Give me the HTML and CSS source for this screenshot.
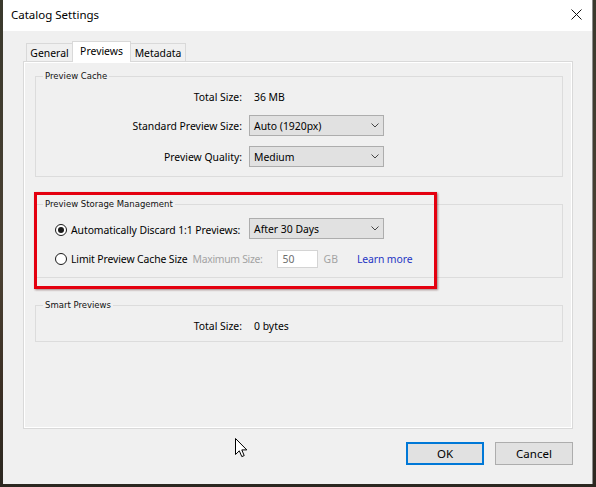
FILE: index.html
```html
<!DOCTYPE html>
<html>
<head>
<meta charset="utf-8">
<title>Catalog Settings</title>
<link rel="stylesheet" href="styles.css">
</head>
<body>
<div class="window">
  <div class="titlebar">
    <span class="title">Catalog Settings</span>
    <svg class="close" viewBox="0 0 11 11" width="11" height="11"><path d="M0.5 0.5 L10.5 10.5 M10.5 0.5 L0.5 10.5" stroke="#111" stroke-width="1" fill="none"/></svg>
  </div>
  <div class="client">
    <div class="tabs">
      <div class="tab general">General</div>
      <div class="tab previews">Previews</div>
      <div class="tab metadata">Metadata</div>
    </div>
    <div class="panel">
      <fieldset class="group cache">
        <legend>Preview Cache</legend>
        <div class="row">
          <span class="label">Total Size:</span><span class="value">36 MB</span>
        </div>
        <div class="row sel r2">
          <span class="label">Standard Preview Size:</span>
          <div class="select"><span>Auto (1920px)</span><svg class="chev" viewBox="0 0 8 5" width="8" height="5"><path d="M0.5 0.5 L4 4 L7.5 0.5" stroke="#444" fill="none" stroke-width="1"/></svg></div>
        </div>
        <div class="row sel r3">
          <span class="label">Preview Quality:</span>
          <div class="select"><span>Medium</span><svg class="chev" viewBox="0 0 8 5" width="8" height="5"><path d="M0.5 0.5 L4 4 L7.5 0.5" stroke="#444" fill="none" stroke-width="1"/></svg></div>
        </div>
      </fieldset>
      <fieldset class="group storage">
        <legend>Preview Storage Management</legend>
        <div class="row sel">
          <span class="radio-label"><span class="radio checked"></span><span class="rtext tight">Automatically Discard 1:1 Previews:</span></span>
          <div class="select"><span>After 30 Days</span><svg class="chev" viewBox="0 0 8 5" width="8" height="5"><path d="M0.5 0.5 L4 4 L7.5 0.5" stroke="#444" fill="none" stroke-width="1"/></svg></div>
        </div>
        <div class="row r-limit">
          <span class="radio-label auto"><span class="radio"></span><span class="rtext">Limit Preview Cache Size</span></span>
          <span class="muted max">Maximum Size:</span>
          <span class="input">50</span>
          <span class="muted gb">GB</span>
          <span class="link">Learn more</span>
        </div>
      </fieldset>
      <fieldset class="group smart">
        <legend>Smart Previews</legend>
        <div class="row">
          <span class="label">Total Size:</span><span class="value">0 bytes</span>
        </div>
      </fieldset>
    </div>
    <div class="buttons">
      <button class="btn default">OK</button>
      <button class="btn">Cancel</button>
    </div>
  </div>
  <div class="highlight"></div>
  <svg class="cursor" viewBox="0 0 13 20" width="13" height="20"><path d="M0.5 0.5 L0.5 16.5 L4.3 12.8 L6.8 18.6 L9.2 17.6 L6.8 11.9 L11.8 11.9 Z" fill="#fff" stroke="#000" stroke-width="1" stroke-linejoin="miter"/></svg>
</div>
</body>
</html>
```

FILE: styles.css
```css
html, body {
  margin: 0;
  padding: 0;
}
body {
  width: 596px;
  height: 487px;
  overflow: hidden;
  background: linear-gradient(180deg, #3a392d 0%, #4a4032 55%, #3b2f24 80%, #2b2720 100%);
  font-family: "Noto Sans", "DejaVu Sans", sans-serif;
  font-size: 10.4px;
  line-height: 14px;
  color: #000;
}
.window {
  position: relative;
  margin-left: 3px;
  width: 589px;
  height: 484px;
  border-right: 1px solid #8c8c8c;
  background: #f0f0f0;
  display: flex;
  flex-direction: column;
}
.titlebar {
  height: 31px;
  flex: none;
  background: #fff;
  display: flex;
  align-items: center;
  justify-content: space-between;
  padding: 0 10px 0 8px;
}
.title {
  font-size: 11.5px;
  line-height: 16px;
  margin-top: -1px;
}
.close {
  display: block;
  margin-top: -3px;
}
.client {
  flex: 1;
  padding: 10px 19px 0 20px;
  display: flex;
  flex-direction: column;
}
.tabs {
  display: flex;
  align-items: flex-end;
  height: 21px;
  margin: 0 0 -1px 3px;
  position: relative;
  z-index: 1;
}
.tab {
  box-sizing: border-box;
  height: 18px;
  margin-bottom: 1px;
  border: 1px solid #d9d9d9;
  border-bottom: none;
  background: #f0f0f0;
  display: flex;
  align-items: center;
  justify-content: center;
}
.tab + .tab {
  margin-left: -1px;
}
.tab.general {
  width: 47px;
}
.tab.previews {
  width: 59px;
  height: 21px;
  margin-bottom: 0;
  padding-bottom: 2px;
  background: #fff;
}
.tab.metadata {
  width: 56px;
}
.panel {
  box-sizing: border-box;
  height: 368px;
  border: 1px solid #d9d9d9;
  box-shadow: inset 1px 1px 0 #fff, inset -1px -1px 0 #fff;
  padding: 8px 9px 0 11px;
}
.group {
  margin: 0;
  padding: 0;
  min-width: 0;
  border: 1px solid #dcdcdc;
}
.group legend {
  font-family: "DejaVu Sans", sans-serif;
  font-size: 8.5px;
  line-height: 12px;
  margin-left: 7px;
  padding: 0 2px;
  color: #111;
}
.cache {
  padding: 5px 0 9px;
}
.storage {
  margin-top: 21px;
  padding: 8px 0 8px;
}
.smart {
  margin-top: 21px;
  padding: 5px 0 5px;
}
.row {
  display: flex;
  align-items: center;
  height: 20px;
}
.row.sel {
  height: 21px;
}
.row.r2 {
  margin-top: 8px;
}
.row.r3 {
  margin-top: 10px;
}
.row.r-limit {
  margin-top: 10px;
}
.label {
  flex: none;
  width: 206px;
  text-align: right;
}
.value {
  margin-left: 12px;
}
.select {
  box-sizing: border-box;
  margin-left: 7px;
  width: 135px;
  height: 21px;
  border: 1px solid #adadad;
  background: #e1e1e1;
  display: flex;
  align-items: center;
  justify-content: space-between;
  padding: 0 4px 0 4px;
}
.chev {
  display: block;
}
.radio-label {
  flex: none;
  box-sizing: border-box;
  width: 206px;
  padding-left: 19px;
  display: flex;
  align-items: center;
  white-space: nowrap;
}
.radio-label.auto {
  width: auto;
}
.rtext {
  white-space: nowrap;
  letter-spacing: -0.1px;
}
.rtext.tight {
  letter-spacing: -0.06px;
  margin-top: 2px;
}
.radio {
  flex: none;
  box-sizing: border-box;
  width: 12px;
  height: 12px;
  border: 1px solid #1a1a1a;
  border-radius: 50%;
  background: #fff;
  margin-right: 4px;
  display: flex;
  align-items: center;
  justify-content: center;
}
.radio.checked {
  margin-top: 2px;
}
.radio.checked::after {
  content: "";
  width: 6px;
  height: 6px;
  border-radius: 50%;
  background: #1a1a1a;
}
.muted {
  color: #a3a3a3;
  white-space: nowrap;
}
.max {
  margin-left: 5px;
  letter-spacing: -0.3px;
}
.input {
  box-sizing: border-box;
  margin-left: 14px;
  width: 41px;
  height: 18px;
  border: 1px solid #d4d4d4;
  background: #fff;
  color: #6d6d6d;
  padding-left: 5px;
  display: flex;
  align-items: center;
}
.gb {
  margin-left: 6px;
}
.link {
  margin-left: 19px;
  color: #2434c4;
  white-space: nowrap;
  letter-spacing: -0.1px;
}
.buttons {
  display: flex;
  justify-content: flex-end;
  gap: 11px;
  margin-top: 13px;
}
.btn {
  box-sizing: border-box;
  width: 78px;
  height: 23px;
  padding: 0;
  border: 1px solid #adadad;
  background: #e1e1e1;
  font-family: "Noto Sans", sans-serif;
  font-size: 11.5px;
  line-height: 16px;
  color: #000;
}
.btn.default {
  border: 2px solid #0078d7;
}
.highlight {
  position: absolute;
  left: 31px;
  top: 192px;
  width: 403px;
  height: 97px;
  box-sizing: border-box;
  border: 3px solid #e4000f;
  box-shadow: 1px 1px 2px rgba(60, 0, 0, 0.45);
  pointer-events: none;
}
.cursor {
  position: absolute;
  left: 232px;
  top: 438px;
}
```
